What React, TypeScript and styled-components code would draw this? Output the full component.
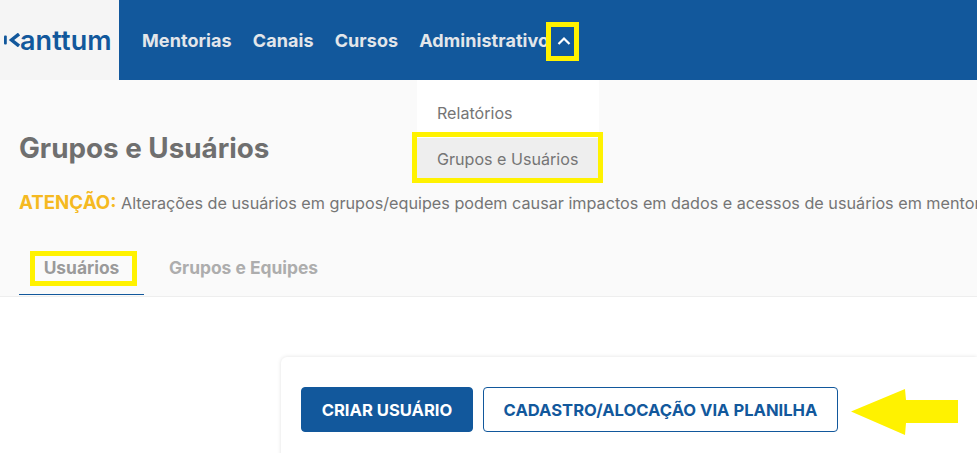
import React from "react";
import styled, { createGlobalStyle } from "styled-components";

const YELLOW = "#fff200";
const BLUE = "#12589c";
const FONT = `Inter, "Open Sans", "Liberation Sans", sans-serif`;

const Global = createGlobalStyle`
  html, body {
    margin: 0;
    padding: 0;
    background: #fff;
    overflow: hidden;
  }
  body {
    font-family: ${FONT};
  }
`;

const Page = styled.div`
  position: relative;
  width: 977px;
  height: 453px;
  overflow: hidden;
`;

const Header = styled.header`
  display: flex;
  height: 80px;
  background: ${BLUE};
`;

const LogoBox = styled.div`
  width: 119px;
  display: flex;
  align-items: center;
  padding-left: 4px;
  box-sizing: border-box;
  background: #f5f5f5;
  color: ${BLUE};
  font-size: 27px;
  font-weight: 600;
  letter-spacing: 0.1px;
`;

const Nav = styled.nav`
  display: flex;
  align-items: center;
  gap: 21px;
  padding-left: 23px;
`;

const NavItem = styled.a`
  position: relative;
  color: #e3e6ea;
  font-size: 18px;
  font-weight: 700;
  letter-spacing: 0.08px;
`;

const Chevron = styled.svg`
  position: absolute;
  left: 138px;
  top: 6px;
`;

const Menu = styled.div`
  position: absolute;
  left: 417px;
  top: 80px;
  width: 182px;
  height: 103px;
  padding-top: 12px;
  box-sizing: border-box;
  background: #fff;
  border-radius: 0 0 8px 8px;
`;

const MenuItem = styled.div<{ $active?: boolean }>`
  height: 41px;
  margin-top: ${(p) => (p.$active ? "5px" : "0")};
  padding-left: 20px;
  display: flex;
  align-items: center;
  color: #757575;
  font-size: 16.1px;
  background: ${(p) => (p.$active ? "#eeeeee" : "transparent")};
`;

const Main = styled.main`
  height: 217px;
  box-sizing: border-box;
  padding: 51px 0 0 19px;
  background: #fafafa;
  border-bottom: 1px solid #eeeeee;
  display: flex;
  flex-direction: column;
`;

const Title = styled.h1`
  margin: 0;
  color: #6f6f6f;
  font-size: 27.8px;
  line-height: 34px;
  font-weight: 700;
`;

const Notice = styled.p`
  margin: 26px 0 0;
  color: #757575;
  font-size: 16.2px;
  line-height: 24px;
  white-space: nowrap;
`;

const NoticeLabel = styled.strong`
  color: #f5b921;
  font-size: 18.7px;
`;

const Tabs = styled.div`
  display: flex;
  margin-top: 27px;
`;

const Tab = styled.div<{ $active?: boolean }>`
  width: ${(p) => (p.$active ? "125px" : "auto")};
  height: 53px;
  margin-right: 25px;
  box-sizing: border-box;
  padding-top: 15px;
  text-align: ${(p) => (p.$active ? "center" : "left")};
  color: ${(p) => (p.$active ? "#9a9a9a" : "#adadad")};
  font-size: 17.4px;
  line-height: 22px;
  font-weight: 700;
  border-bottom: ${(p) => (p.$active ? `1px solid ${BLUE}` : "none")};
`;

const Content = styled.section`
  padding: 60px 0 0 281px;
`;

const Card = styled.div`
  display: flex;
  gap: 10px;
  height: 120px;
  padding: 30px 0 0 20px;
  background: #fff;
  border-radius: 6px 0 0 0;
  box-shadow: 0 0 4px rgba(0, 0, 0, 0.12);
`;

const Button = styled.button<{ $outline?: boolean }>`
  height: 45px;
  box-sizing: border-box;
  border-radius: 4px;
  border: 1px solid ${BLUE};
  background: ${(p) => (p.$outline ? "#fff" : BLUE)};
  color: ${(p) => (p.$outline ? BLUE : "#fff")};
  width: ${(p) => (p.$outline ? "355px" : "172px")};
  font-family: ${FONT};
  font-size: 16.6px;
  font-weight: 700;
  padding: 0;
`;

const Highlight = styled.div<{ $x: number; $y: number; $w: number; $h: number; $b: number }>`
  position: absolute;
  left: ${(p) => p.$x}px;
  top: ${(p) => p.$y}px;
  width: ${(p) => p.$w}px;
  height: ${(p) => p.$h}px;
  box-sizing: border-box;
  border: ${(p) => p.$b}px solid ${YELLOW};
`;

const Arrow = styled.svg`
  position: absolute;
  left: 850px;
  top: 388px;
`;

export default function App() {
  return (
    <Page>
      <Global />
      <Header>
        <LogoBox>
          <svg width="16" height="14" viewBox="0 0 16 14" fill="none">
            <rect x="0" y="2.5" width="2.8" height="9" rx="1" fill={BLUE} />
            <path d="M15 1 L7.5 7 L15 13" stroke={BLUE} strokeWidth="3.4" />
          </svg>
          anttum
        </LogoBox>
        <Nav>
          <NavItem>Mentorias</NavItem>
          <NavItem>Canais</NavItem>
          <NavItem>Cursos</NavItem>
          <NavItem>
            Administrativo
            <Chevron width="14" height="10" viewBox="0 0 14 10" fill="none">
              <path d="M1.5 8 L7 2.5 L12.5 8" stroke="#fff" strokeWidth="2.2" />
            </Chevron>
          </NavItem>
        </Nav>
      </Header>
      <Main>
        <Title>Grupos e Usuários</Title>
        <Notice>
          <NoticeLabel>ATENÇÃO:</NoticeLabel> Alterações de usuários em grupos/equipes podem causar impactos em dados e acessos de usuários em mentorias
        </Notice>
        <Tabs>
          <Tab $active>Usuários</Tab>
          <Tab>Grupos e Equipes</Tab>
        </Tabs>
      </Main>
      <Content>
        <Card>
          <Button>CRIAR USUÁRIO</Button>
          <Button $outline>CADASTRO/ALOCAÇÃO VIA PLANILHA</Button>
        </Card>
      </Content>
      <Menu>
        <MenuItem>Relatórios</MenuItem>
        <MenuItem $active>Grupos e Usuários</MenuItem>
      </Menu>
      <Highlight $x={546} $y={22} $w={33} $h={39} $b={5} />
      <Highlight $x={412} $y={132} $w={191} $h={51} $b={5} />
      <Highlight $x={30} $y={251} $w={107} $h={35} $b={5} />
      <Arrow width="110" height="48" viewBox="0 0 110 48">
        <path d="M1 23.5 L55 1 L56 12 L108 12 L108 35 L56 35 L55 47 Z" fill={YELLOW} />
      </Arrow>
    </Page>
  );
}
